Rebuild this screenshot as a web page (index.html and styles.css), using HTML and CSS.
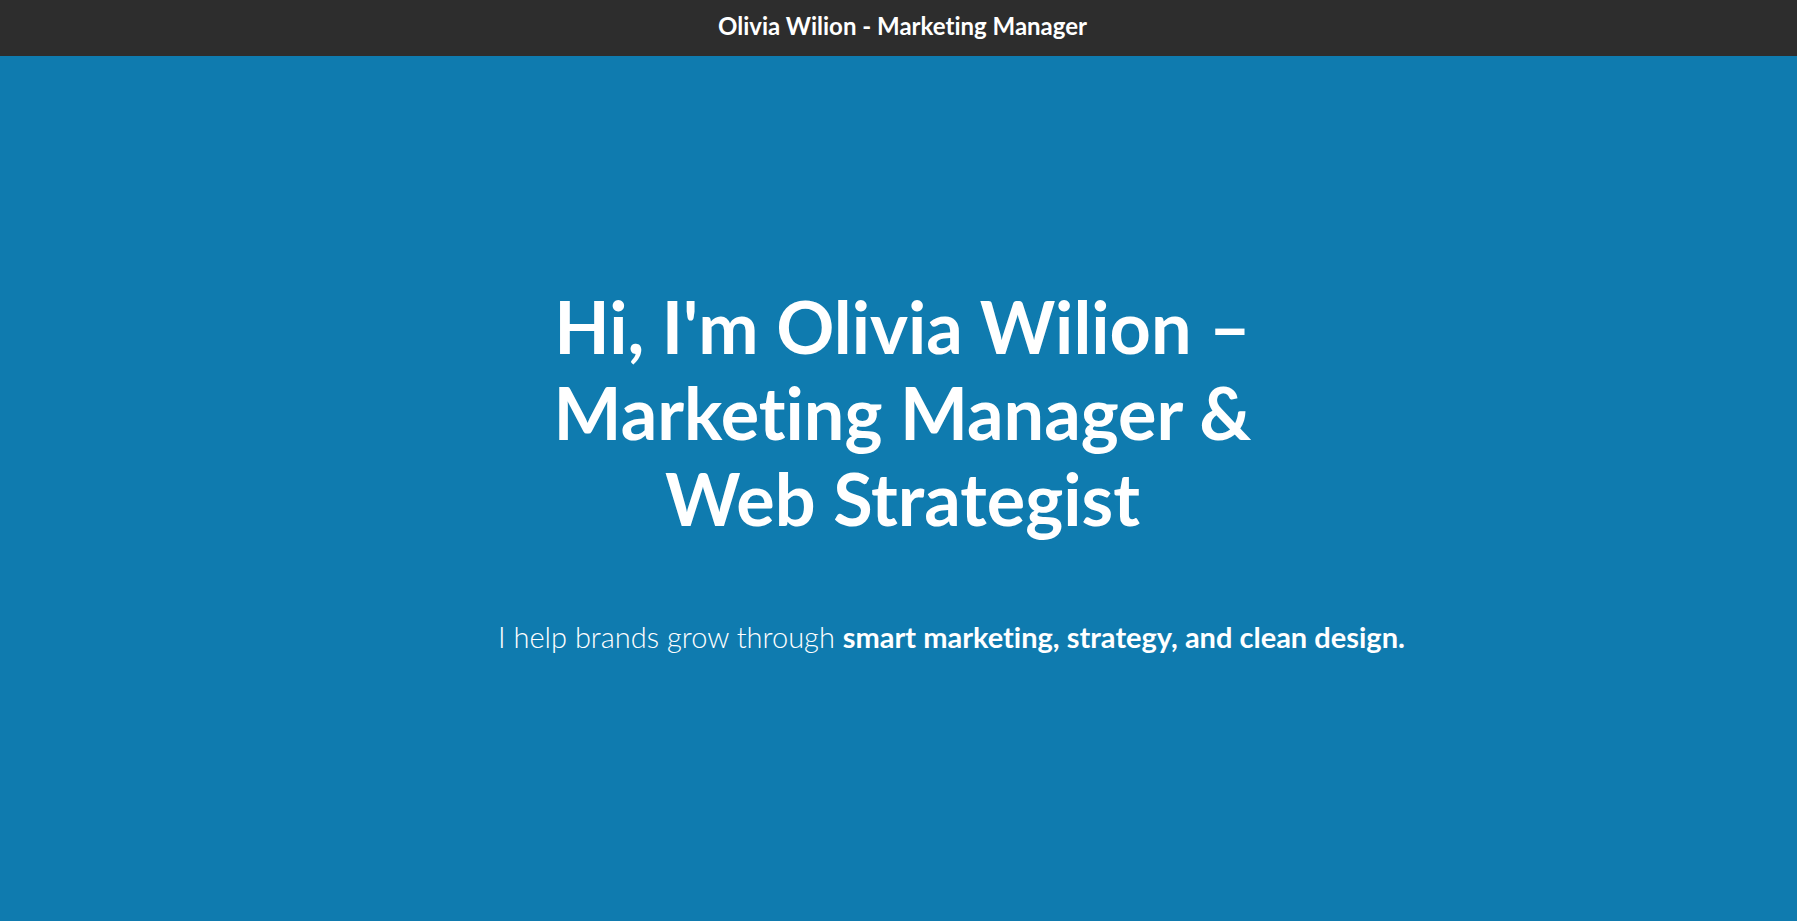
FILE: index.html
```html
<!DOCTYPE html>
<html lang="en">
<head>
<meta charset="utf-8">
<title>Olivia Wilion - Marketing Manager</title>
<link rel="stylesheet" href="styles.css">
</head>
<body>
<header class="topbar">
  <div class="topbar-title">Olivia Wilion - Marketing Manager</div>
</header>
<main class="hero">
  <h1 class="hero-title">Hi, I'm Olivia Wilion –<br>Marketing Manager &amp;<br>Web Strategist</h1>
  <p class="hero-sub">I help brands grow through <strong>smart marketing, strategy, and clean design.</strong></p>
</main>
</body>
</html>
```

FILE: styles.css
```css
html, body {
  margin: 0;
  padding: 0;
  height: 100%;
}
body {
  font-family: Lato, "Open Sans", Arial, sans-serif;
  font-variant-ligatures: none;
  background: #0f7baf;
  color: #ffffff;
  display: flex;
  flex-direction: column;
}
.topbar {
  background: #2d2d2d;
  height: 56px;
  display: flex;
  align-items: center;
  justify-content: center;
  flex-shrink: 0;
}
.topbar-title {
  font-size: 24px;
  font-weight: 700;
  padding-left: 8px;
  padding-bottom: 6px;
}
.hero {
  flex: 1;
  background: #0f7baf;
  display: flex;
  flex-direction: column;
  align-items: center;
  padding-top: 227px;
}
.hero-title {
  margin: 0;
  font-size: 72px;
  line-height: 86px;
  font-weight: 700;
  text-align: center;
  padding-left: 8px;
}
.hero-sub {
  margin: 78px 0 0 0;
  font-size: 29px;
  font-weight: 300;
  text-align: center;
  padding-left: 106px;
}
.hero-sub strong {
  font-weight: 700;
}
```
